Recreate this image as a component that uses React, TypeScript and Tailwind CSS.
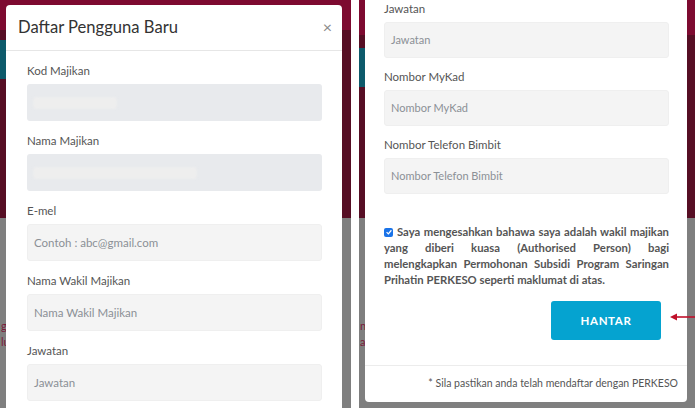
import React from 'react';

const FONT = "font-['Lato','Open_Sans',sans-serif]";

type FieldProps = {
  label: string;
  placeholder?: string;
  disabled?: boolean;
  blurWidth?: number;
  tall?: boolean;
};

function Field({ label, placeholder, disabled, blurWidth, tall }: FieldProps) {
  return (
    <div className="flex flex-col">
      <label className="text-[11.5px] leading-[16px] text-[#555] mb-[5px]">{label}</label>
      <div
        className={`${tall ? 'h-[37px]' : 'h-[36px]'} rounded-[3px] flex items-center px-[6px] ${
          disabled ? 'bg-[#e8eaed]' : 'bg-[#f4f4f4] border border-[#efefef]'
        }`}
      >
        {disabled ? (
          <div className="h-[12px] rounded-sm bg-[#eeeeee] blur-[1px]" style={{ width: blurWidth }} />
        ) : (
          <span className={`${tall ? 'text-[11.5px]' : 'text-[11px]'} text-[#8b9096]`}>{placeholder}</span>
        )}
      </div>
    </div>
  );
}

function PageBackground({ variant }: { variant: 'left' | 'right' }) {
  const top = variant === 'left' ? 'h-[30px]' : 'h-[35px]';
  return (
    <div className="absolute inset-0 flex flex-col">
      <div className={`${top} bg-[#7d0a30]`} />
      <div className="flex-1 bg-[#560e24] flex flex-col">
        <div className={variant === 'left' ? 'h-[10px]' : 'h-[13px]'} />
        <div className="h-[39px] w-[60px] bg-[#0d5a6b]" />
      </div>
      <div className="h-[190px] bg-[#7f7f7f] flex flex-col pt-[100px] pl-[1px] text-[11px] leading-[16px] text-[#7a1a38]">
        <span>{variant === 'left' ? 'ge' : ' n'}</span>
        <span>{variant === 'left' ? 'lu' : 'ar'}</span>
      </div>
    </div>
  );
}

function LeftModal() {
  return (
    <div className="absolute left-[6px] top-[5px] w-[336px] h-[420px] bg-white rounded-t-[4px] overflow-hidden">
      <div className="h-[46px] flex items-center justify-between pl-[12px] pr-[10px] border-b border-[#e6e6e6]">
        <h2 className="text-[16.6px] text-[#333]">Daftar Pengguna Baru</h2>
        <span className="text-[16px] leading-none text-[#8a8a8a] -mt-[2px]">×</span>
      </div>
      <div className="pt-[12px] pl-[21px] pr-[20px] flex flex-col gap-[12px]">
        <Field label="Kod Majikan" disabled blurWidth={84} tall />
        <Field label="Nama Majikan" disabled blurWidth={164} tall />
        <Field label="E-mel" placeholder="Contoh : abc@gmail.com" tall />
        <Field label="Nama Wakil Majikan" placeholder="Nama Wakil Majikan" tall />
        <Field label="Jawatan" placeholder="Jawatan" tall />
      </div>
    </div>
  );
}

const LINES = [
  'yang diberi kuasa (Authorised Person) bagi',
  'melengkapkan Permohonan Subsidi Program Saringan',
];

function RightModal() {
  return (
    <div className="absolute left-[6px] top-0 w-[322px] h-[402px] bg-white rounded-b-[4px] flex flex-col">
      <div className="pt-[1px] pl-[19px] pr-[18px] flex flex-col gap-[11px]">
        <Field label="Jawatan" placeholder="Jawatan" />
        <Field label="Nombor MyKad" placeholder="Nombor MyKad" />
        <Field label="Nombor Telefon Bimbit" placeholder="Nombor Telefon Bimbit" />
      </div>
      <div className="mt-[30px] pl-[19px] pr-[18px] text-[11.3px] leading-[16px] font-bold text-[#555]">
        <div className="flex items-center">
          <span className="flex shrink-0 mr-[4px] w-[9px] h-[9px] rounded-[2px] bg-[#1a73e8] items-center justify-center">
            <svg viewBox="0 0 10 10" className="w-[8px] h-[8px]">
              <path d="M2 5.2 L4.2 7.3 L8 2.8" fill="none" stroke="white" strokeWidth="1.6" />
            </svg>
          </span>
          <span className="flex-1 text-justify [text-align-last:justify]">
            Saya mengesahkan bahawa saya adalah wakil majikan
          </span>
        </div>
        {LINES.map((l) => (
          <div key={l} className="text-justify [text-align-last:justify]">
            {l}
          </div>
        ))}
        <div>Prihatin PERKESO seperti maklumat di atas.</div>
      </div>
      <div className="mt-[13px] flex justify-end pr-[26px]">
        <button className="w-[110px] h-[39px] rounded-[3px] bg-[#05a3d0] text-white text-[11.5px] font-bold tracking-[0.6px]">
          HANTAR
        </button>
      </div>
      <div className="mt-[25px] border-t border-[#ececec] flex-1 flex items-center justify-end pr-[9px]">
        <span className="text-[10.5px] text-[#555]">* Sila pastikan anda telah mendaftar dengan PERKESO</span>
      </div>
    </div>
  );
}

export default function App() {
  return (
    <div className={`${FONT} w-[695px] h-[408px] flex overflow-hidden bg-white`}>
      <div className="relative w-[351px] h-full overflow-hidden">
        <PageBackground variant="left" />
        <LeftModal />
      </div>
      <div className="w-[8px] h-full bg-white" />
      <div className="relative flex-1 h-full overflow-hidden">
        <PageBackground variant="right" />
        <RightModal />
        <svg className="absolute left-[311px] top-[312px]" width="25" height="10" viewBox="0 0 25 10">
          <path d="M5 5 H25" stroke="#c0102a" strokeWidth="1.6" />
          <path d="M0 5 L7 1.5 L7 8.5 Z" fill="#c0102a" />
        </svg>
      </div>
    </div>
  );
}
